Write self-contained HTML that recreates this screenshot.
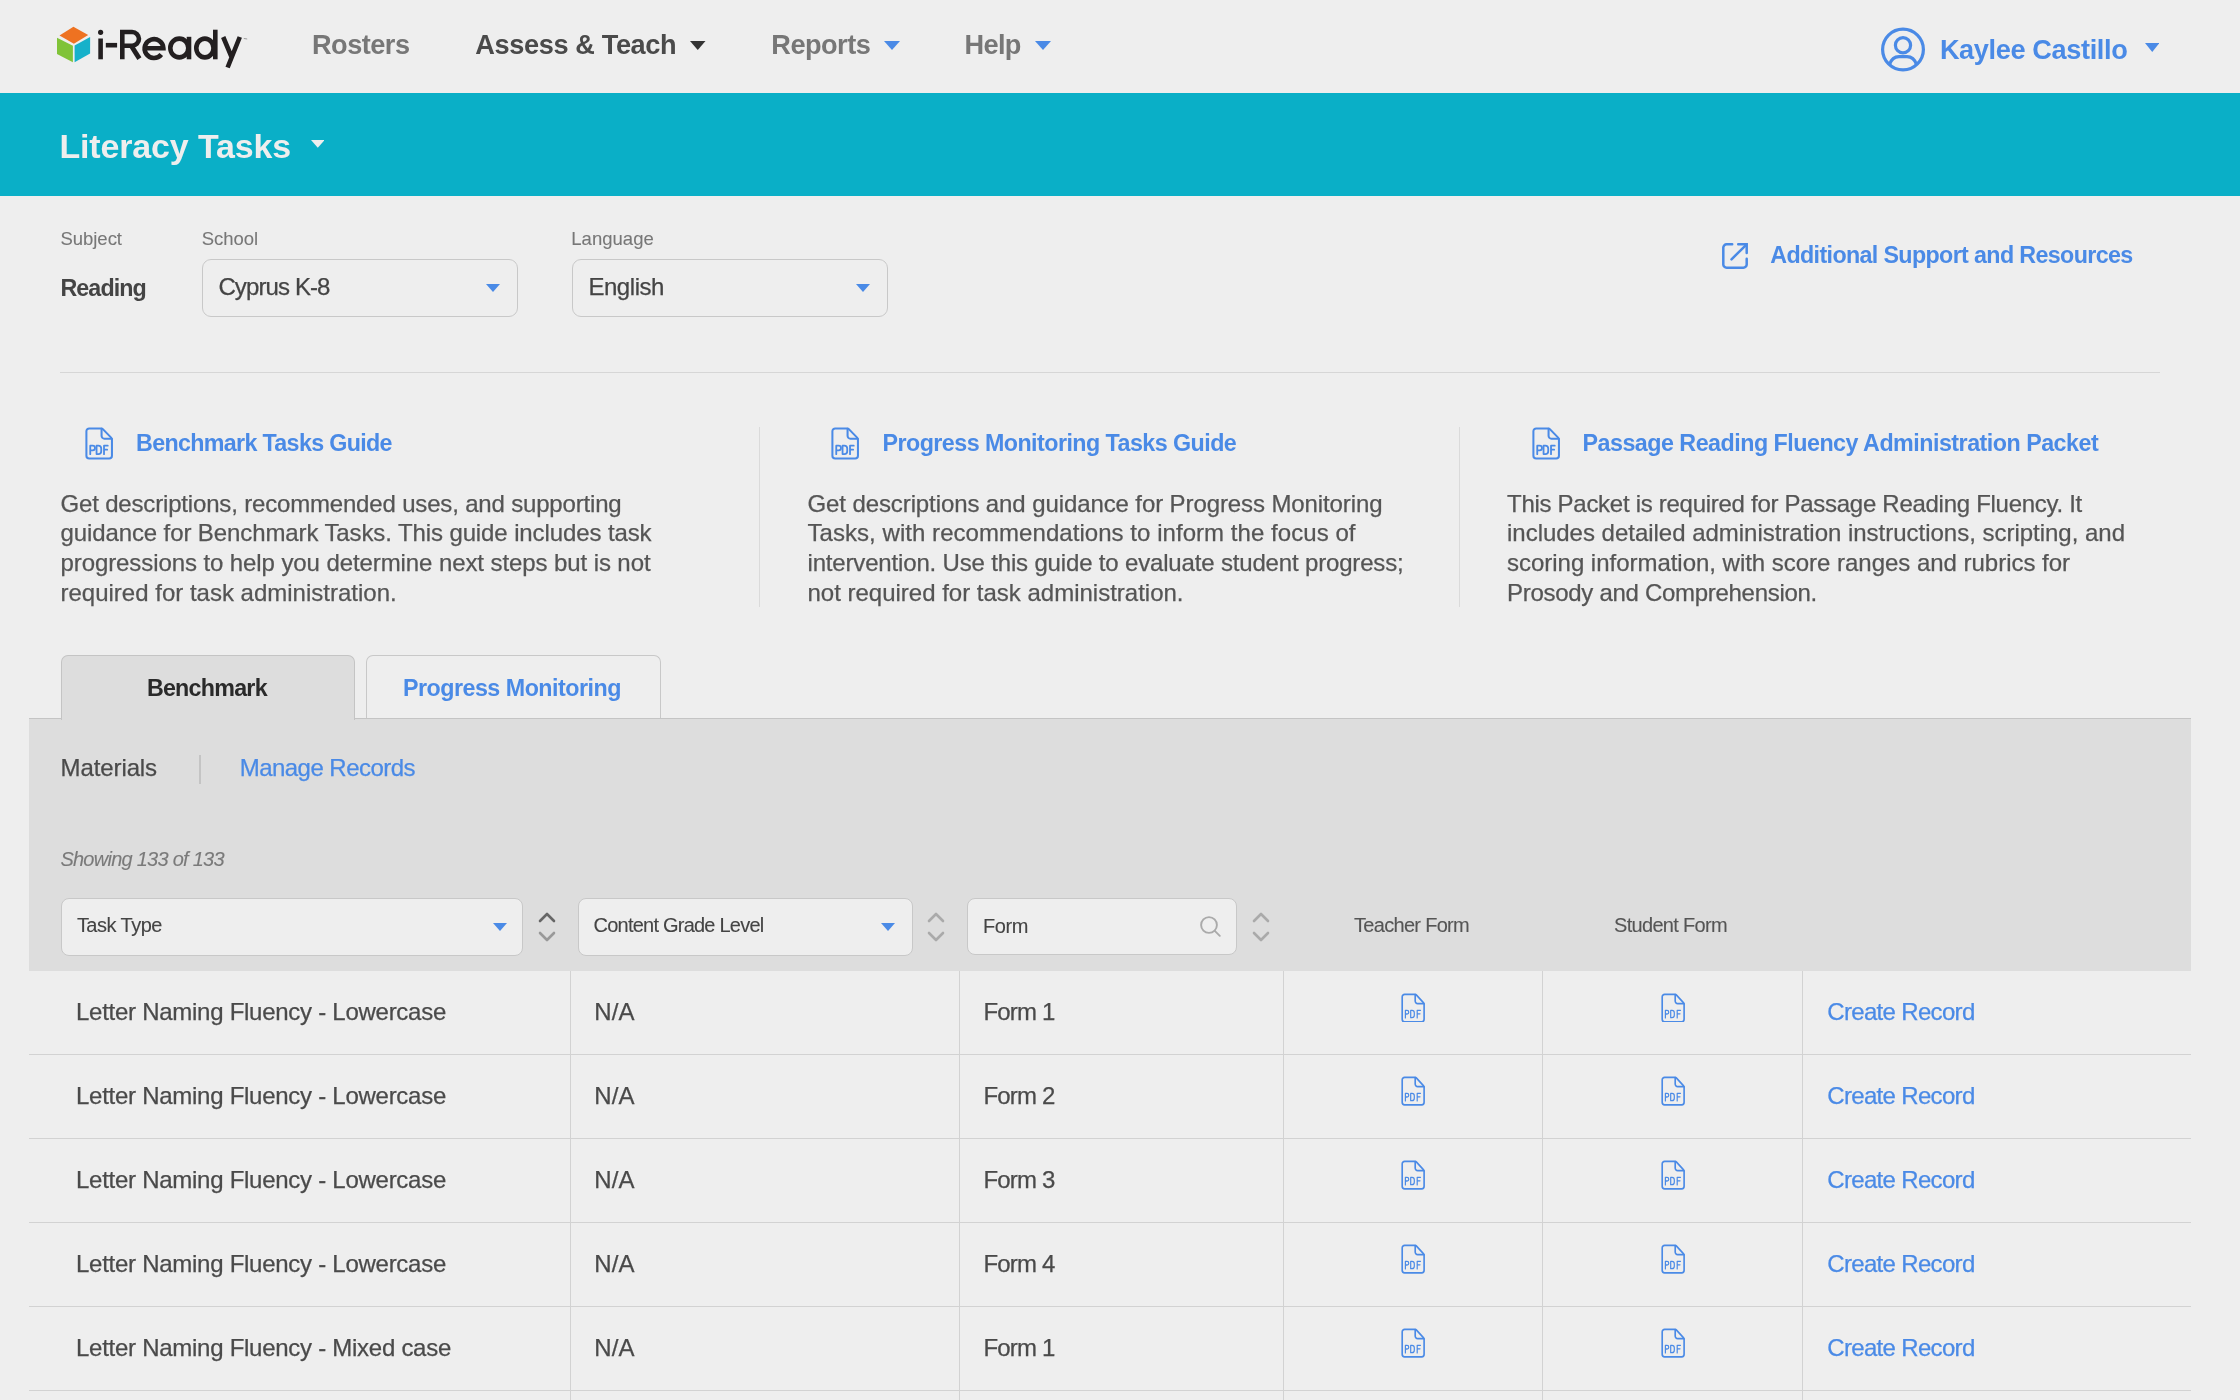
<!DOCTYPE html>
<html><head><meta charset="utf-8"><title>Literacy Tasks</title>
<style>
html,body{margin:0;padding:0;width:2240px;height:1400px;overflow:hidden;background:#eeeeee;font-family:"Liberation Sans",sans-serif}
.a{position:absolute;display:block}
.t{position:absolute;white-space:nowrap;line-height:1;-webkit-text-stroke:0.25px currentColor}
#root{position:absolute;left:0;top:0;width:2240px;height:1400px;will-change:transform}
.box{background:#eeeeee;border:1.5px solid #c8c8c8;box-sizing:border-box}
</style></head><body>
<svg width="0" height="0" style="position:absolute"><defs>
<g id="pdf" fill="none" stroke="#4a8ae6" stroke-width="1.75" stroke-linecap="round" stroke-linejoin="round">
<path d="M14.1 1.3 H3.6 A2.4 2.4 0 0 0 1.2 3.7 V24.8 A2.4 2.4 0 0 0 3.6 27.2 H20.7 A2.4 2.4 0 0 0 23.1 24.8 V10.6 A1.6 1.6 0 0 0 22.6 9.4 L15.3 1.8 A1.6 1.6 0 0 0 14.1 1.3 Z"/>
<path d="M14.2 1.5 V7.6 A2.5 2.5 0 0 0 16.7 10.1 H22.9"/>
<path d="M4.5 23.4 V16.1 H6.5 A2.05 2.05 0 0 1 6.5 20.2 H4.5" stroke-width="1.55"/>
<path d="M9.9 23.3 V16.1 H11.4 A2.5 2.5 0 0 1 13.9 18.6 V20.8 A2.5 2.5 0 0 1 11.4 23.3 Z" stroke-width="1.55"/>
<path d="M16.3 23.4 V16.1 H19.5 M16.3 19.5 H19" stroke-width="1.55"/>
</g>
<g id="pdfs" fill="none" stroke="#4a8ae6" stroke-width="1.65" stroke-linecap="round" stroke-linejoin="round">
<path d="M14.1 1.3 H3.6 A2.4 2.4 0 0 0 1.2 3.7 V24.8 A2.4 2.4 0 0 0 3.6 27.2 H20.7 A2.4 2.4 0 0 0 23.1 24.8 V10.6 A1.6 1.6 0 0 0 22.6 9.4 L15.3 1.8 A1.6 1.6 0 0 0 14.1 1.3 Z"/>
<path d="M14.2 1.5 V7.6 A2.5 2.5 0 0 0 16.7 10.1 H22.9"/>
<path d="M4.4 23.5 V16.3 H6 A1.75 1.75 0 0 1 6 19.8 H4.4" stroke-width="1.2"/>
<path d="M9.7 23.3 V16.3 H11 A2.3 2.3 0 0 1 13.3 18.6 V21 A2.3 2.3 0 0 1 11 23.3 Z" stroke-width="1.2"/>
<path d="M16.2 23.5 V16.3 H19.5 M16.2 19.6 H19" stroke-width="1.2"/>
</g></defs></svg>
<div id="root"><svg class="a" style="left:0;top:0" width="260" height="93" viewBox="0 0 260 93">
<g>
<path d="M73.4 26.8 L88.2 35 L73.9 43.7 L59.5 35.4 Z" fill="#ee7221"/>
<path d="M57 37.8 L72.9 45.7 V62.2 L57 53.9 Z" fill="#80c338"/>
<path d="M74.6 45.5 L90.1 37 V53.5 L74.6 62.2 Z" fill="#16b1ca"/>
</g>
<g fill="none" stroke="#231f20" stroke-width="4.6">
<circle cx="100.6" cy="32.3" r="2.6" fill="#231f20" stroke="none"/>
<path d="M100.6 38.5 V59.3"/>
<path d="M105.8 45.2 H117.1"/>
<path d="M122.3 59.3 V32 H132.1 A6.85 6.85 0 0 1 132.1 45.7 H122.3"/><path d="M131.2 45.7 L139.4 58.6" stroke-width="4.8"/>
<path d="M146.2 48.3 H163.4 A9.4 9.4 0 1 0 161.3 54.5"/>
<ellipse cx="179.3" cy="48" rx="9" ry="9.4"/>
<path d="M189 36.8 V59.3"/>
<ellipse cx="204.9" cy="48" rx="8.6" ry="9.4"/>
<path d="M215.3 29.7 V59.3"/>
<path d="M223.2 37 L231.8 57.5 M239.8 37 L227.6 67.5"/>
<path d="M243.8 38.5 L247.2 39" stroke="#9a9a9a" stroke-width="1"/>
</g>
</svg>
<div class="t" style="left:312.00px;top:31.00px;font-size:27.16px;color:#777777;font-weight:bold;-webkit-text-stroke:0;letter-spacing:-0.520px;">Rosters</div>
<div class="t" style="left:475.30px;top:31.00px;font-size:27.16px;color:#4a4a4a;font-weight:bold;-webkit-text-stroke:0;letter-spacing:-0.381px;">Assess &amp; Teach</div>
<svg class="a" style="left:690px;top:40.5px" width="15.5" height="9" viewBox="0 0 15.5 9"><path d="M0 0H15.5L7.75 9Z" fill="#333333"/></svg>
<div class="t" style="left:771.30px;top:31.00px;font-size:27.16px;color:#777777;font-weight:bold;-webkit-text-stroke:0;letter-spacing:-0.517px;">Reports</div>
<svg class="a" style="left:883.5px;top:40.5px" width="16" height="9" viewBox="0 0 16 9"><path d="M0 0H16L8.0 9Z" fill="#4a8ae6"/></svg>
<div class="t" style="left:964.60px;top:31.00px;font-size:27.16px;color:#777777;font-weight:bold;-webkit-text-stroke:0;letter-spacing:-0.664px;">Help</div>
<svg class="a" style="left:1034.8px;top:40.5px" width="16" height="9" viewBox="0 0 16 9"><path d="M0 0H16L8.0 9Z" fill="#4a8ae6"/></svg>
<svg class="a" style="left:1878px;top:25px" width="50" height="50" viewBox="0 0 50 50" fill="none" stroke="#4a8ae6" stroke-width="3.2">
<circle cx="25" cy="24.5" r="20.4"/>
<circle cx="25" cy="20.3" r="7.6"/>
<path d="M11.5 39.5 C13.5 33.5 17 31.6 21 31.6 H29 C33 31.6 36.5 33.5 38.5 39.5"/>
</svg>
<div class="t" style="left:1939.90px;top:36.00px;font-size:27.16px;color:#4a8ae6;font-weight:bold;-webkit-text-stroke:0;letter-spacing:-0.382px;">Kaylee Castillo</div>
<svg class="a" style="left:2144.5px;top:42.9px" width="14.5" height="9" viewBox="0 0 14.5 9"><path d="M0 0H14.5L7.25 9Z" fill="#4a8ae6"/></svg>
<div class="a" style="left:0;top:93px;width:2240px;height:103px;background:#0aafc7"></div>
<div class="t" style="left:59.40px;top:130.00px;font-size:33.95px;color:#eeeeee;font-weight:bold;-webkit-text-stroke:0;letter-spacing:-0.121px;">Literacy Tasks</div>
<svg class="a" style="left:310.9px;top:140.2px" width="13.6" height="7.8" viewBox="0 0 13.6 7.8"><path d="M0 0H13.6L6.8 7.8Z" fill="#eeeeee"/></svg>
<div class="t" style="left:60.40px;top:230.00px;font-size:18.5px;color:#777777;-webkit-text-stroke:0.1px currentColor;letter-spacing:-0.015px;">Subject</div>
<div class="t" style="left:201.70px;top:230.00px;font-size:18.5px;color:#777777;-webkit-text-stroke:0.1px currentColor;letter-spacing:-0.011px;">School</div>
<div class="t" style="left:571.30px;top:230.00px;font-size:18.5px;color:#777777;-webkit-text-stroke:0.1px currentColor;letter-spacing:0.023px;">Language</div>
<div class="t" style="left:60.40px;top:277.00px;font-size:23.28px;color:#444444;font-weight:bold;-webkit-text-stroke:0;letter-spacing:-0.891px;">Reading</div>
<div class="a box" style="left:202px;top:259px;width:316px;height:58px;border-radius:9px"></div>
<div class="t" style="left:218.40px;top:275.00px;font-size:24px;color:#444444;letter-spacing:-0.884px;">Cyprus K-8</div>
<svg class="a" style="left:486px;top:283.5px" width="14" height="8" viewBox="0 0 14 8"><path d="M0 0H14L7.0 8Z" fill="#4a8ae6"/></svg>
<div class="a box" style="left:572px;top:259px;width:316px;height:58px;border-radius:9px"></div>
<div class="t" style="left:588.40px;top:275.00px;font-size:24px;color:#444444;letter-spacing:-0.445px;">English</div>
<svg class="a" style="left:856px;top:283.5px" width="14" height="8" viewBox="0 0 14 8"><path d="M0 0H14L7.0 8Z" fill="#4a8ae6"/></svg>
<svg class="a" style="left:1722px;top:242.7px" width="26" height="26" viewBox="0 0 26 26" fill="none" stroke="#4a8ae6" stroke-width="2.5" stroke-linecap="round">
<path d="M10.2 1.3 H4.6 A3.3 3.3 0 0 0 1.3 4.6 V21.4 A3.3 3.3 0 0 0 4.6 24.7 H21.4 A3.3 3.3 0 0 0 24.7 21.4 V15.8"/>
<path d="M16.2 1.3 H24.7 V10" stroke-linejoin="miter"/><path d="M24.2 1.8 L9.5 16.3"/>
</svg>
<div class="t" style="left:1770.30px;top:244.00px;font-size:23.28px;color:#4a8ae6;font-weight:bold;-webkit-text-stroke:0;letter-spacing:-0.636px;">Additional Support and Resources</div>
<div class="a" style="left:60px;top:372px;width:2100px;height:1px;background:#d6d6d6"></div>
<svg class="a" style="left:84.8px;top:427px" width="28" height="32.5" viewBox="0 0 24 28" preserveAspectRatio="none"><use href="#pdf"/></svg>
<div class="t" style="left:136.00px;top:432.00px;font-size:23.28px;color:#4a8ae6;font-weight:bold;-webkit-text-stroke:0;letter-spacing:-0.666px;">Benchmark Tasks Guide</div>
<svg class="a" style="left:831.3px;top:427px" width="28" height="32.5" viewBox="0 0 24 28" preserveAspectRatio="none"><use href="#pdf"/></svg>
<div class="t" style="left:882.50px;top:432.00px;font-size:23.28px;color:#4a8ae6;font-weight:bold;-webkit-text-stroke:0;letter-spacing:-0.543px;">Progress Monitoring Tasks Guide</div>
<svg class="a" style="left:1532.3px;top:427px" width="28" height="32.5" viewBox="0 0 24 28" preserveAspectRatio="none"><use href="#pdf"/></svg>
<div class="t" style="left:1582.50px;top:432.00px;font-size:23.28px;color:#4a8ae6;font-weight:bold;-webkit-text-stroke:0;letter-spacing:-0.503px;">Passage Reading Fluency Administration Packet</div>
<div class="a" style="left:759px;top:427px;width:1px;height:180px;background:#dadada"></div>
<div class="a" style="left:1459px;top:427px;width:1px;height:180px;background:#dadada"></div>
<div class="t" style="left:60.50px;top:492.00px;font-size:24px;color:#555555;letter-spacing:-0.173px;">Get descriptions, recommended uses, and supporting</div>
<div class="t" style="left:60.50px;top:521.00px;font-size:24px;color:#555555;letter-spacing:-0.107px;">guidance for Benchmark Tasks. This guide includes task</div>
<div class="t" style="left:60.50px;top:551.00px;font-size:24px;color:#555555;letter-spacing:-0.090px;">progressions to help you determine next steps but is not</div>
<div class="t" style="left:60.50px;top:581.00px;font-size:24px;color:#555555;">required for task administration.</div>
<div class="t" style="left:807.50px;top:492.00px;font-size:24px;color:#555555;letter-spacing:-0.101px;">Get descriptions and guidance for Progress Monitoring</div>
<div class="t" style="left:807.50px;top:521.00px;font-size:24px;color:#555555;letter-spacing:0.049px;">Tasks, with recommendations to inform the focus of</div>
<div class="t" style="left:807.50px;top:551.00px;font-size:24px;color:#555555;letter-spacing:-0.167px;">intervention. Use this guide to evaluate student progress;</div>
<div class="t" style="left:807.50px;top:581.00px;font-size:24px;color:#555555;letter-spacing:-0.005px;">not required for task administration.</div>
<div class="t" style="left:1507.00px;top:492.00px;font-size:24px;color:#555555;letter-spacing:-0.282px;">This Packet is required for Passage Reading Fluency. It</div>
<div class="t" style="left:1507.00px;top:521.00px;font-size:24px;color:#555555;letter-spacing:-0.017px;">includes detailed administration instructions, scripting, and</div>
<div class="t" style="left:1507.00px;top:551.00px;font-size:24px;color:#555555;letter-spacing:-0.023px;">scoring information, with score ranges and rubrics for</div>
<div class="t" style="left:1507.00px;top:581.00px;font-size:24px;color:#555555;letter-spacing:-0.290px;">Prosody and Comprehension.</div>
<div class="a" style="left:29px;top:718px;width:2162px;height:253px;background:#dddddd;border-top:1.5px solid #c4c4c4;box-sizing:border-box"></div>
<div class="a" style="left:60.5px;top:655px;width:294.5px;height:65px;background:#dddddd;border:1.5px solid #c4c4c4;border-bottom:none;border-radius:7px 7px 0 0;box-sizing:border-box"></div>
<div class="a" style="left:366px;top:655px;width:294.5px;height:63px;background:#eeeeee;border:1.5px solid #c8c8c8;border-bottom:none;border-radius:7px 7px 0 0;box-sizing:border-box"></div>
<div class="t" style="left:146.90px;top:677.00px;font-size:23.28px;color:#2a2a2a;font-weight:bold;-webkit-text-stroke:0;letter-spacing:-0.756px;">Benchmark</div>
<div class="t" style="left:403.00px;top:677.00px;font-size:23.28px;color:#4a8ae6;font-weight:bold;-webkit-text-stroke:0;letter-spacing:-0.508px;">Progress Monitoring</div>
<div class="t" style="left:60.60px;top:756.00px;font-size:24px;color:#4a4a4a;letter-spacing:-0.107px;">Materials</div>
<div class="a" style="left:199px;top:754.5px;width:1.5px;height:29px;background:#c4c4c4"></div>
<div class="t" style="left:239.70px;top:756.00px;font-size:24px;color:#4a8ae6;letter-spacing:-0.534px;">Manage Records</div>
<div class="t" style="left:60.40px;top:849.00px;font-size:20px;color:#7a7a7a;font-style:italic;-webkit-text-stroke:0.1px currentColor;letter-spacing:-0.745px;">Showing 133 of 133</div>
<div class="a box" style="left:60.5px;top:897.5px;width:462px;height:58px;border-radius:8px"></div>
<div class="t" style="left:76.90px;top:915.00px;font-size:20px;color:#444444;-webkit-text-stroke:0.1px currentColor;letter-spacing:-0.520px;">Task Type</div>
<svg class="a" style="left:492.8px;top:922.9px" width="14" height="8" viewBox="0 0 14 8"><path d="M0 0H14L7.0 8Z" fill="#4a8ae6"/></svg>
<div class="a box" style="left:578px;top:897.5px;width:334.5px;height:58px;border-radius:8px"></div>
<div class="t" style="left:593.50px;top:915.00px;font-size:20px;color:#444444;-webkit-text-stroke:0.1px currentColor;letter-spacing:-0.767px;">Content Grade Level</div>
<svg class="a" style="left:881px;top:922.9px" width="14" height="8" viewBox="0 0 14 8"><path d="M0 0H14L7.0 8Z" fill="#4a8ae6"/></svg>
<div class="a box" style="left:967px;top:898.3px;width:269.5px;height:57px;border-radius:8px"></div>
<div class="t" style="left:983.00px;top:916.00px;font-size:20px;color:#444444;-webkit-text-stroke:0.1px currentColor;letter-spacing:-0.416px;">Form</div>
<svg class="a" style="left:1196px;top:912px" width="28" height="28" viewBox="0 0 28 28" fill="none" stroke="#aaaaaa" stroke-width="1.9" stroke-linecap="round"><circle cx="13" cy="13" r="7.9"/><path d="M18.8 18.8 L23.8 23.8"/></svg>
<svg class="a" style="left:538px;top:910px" width="18" height="34" viewBox="0 0 18 34" fill="none" stroke-width="2.6" stroke-linecap="round" stroke-linejoin="round"><path d="M2 11 L9 4 L16 11" stroke="#666666"/><path d="M2 23 L9 30 L16 23" stroke="#999999"/></svg>
<svg class="a" style="left:927px;top:910px" width="18" height="34" viewBox="0 0 18 34" fill="none" stroke-width="2.6" stroke-linecap="round" stroke-linejoin="round"><path d="M2 11 L9 4 L16 11" stroke="#aaaaaa"/><path d="M2 23 L9 30 L16 23" stroke="#aaaaaa"/></svg>
<svg class="a" style="left:1252px;top:910px" width="18" height="34" viewBox="0 0 18 34" fill="none" stroke-width="2.6" stroke-linecap="round" stroke-linejoin="round"><path d="M2 11 L9 4 L16 11" stroke="#aaaaaa"/><path d="M2 23 L9 30 L16 23" stroke="#aaaaaa"/></svg>
<div class="t" style="left:1354.00px;top:915.00px;font-size:20px;color:#555555;-webkit-text-stroke:0.1px currentColor;letter-spacing:-0.698px;">Teacher Form</div>
<div class="t" style="left:1614.00px;top:915.00px;font-size:20px;color:#555555;-webkit-text-stroke:0.1px currentColor;letter-spacing:-0.680px;">Student Form</div>
<div class="a" style="left:570px;top:971px;width:1px;height:429px;background:#d2d2d2"></div>
<div class="a" style="left:959px;top:971px;width:1px;height:429px;background:#d2d2d2"></div>
<div class="a" style="left:1283px;top:971px;width:1px;height:429px;background:#d2d2d2"></div>
<div class="a" style="left:1542px;top:971px;width:1px;height:429px;background:#d2d2d2"></div>
<div class="a" style="left:1802px;top:971px;width:1px;height:429px;background:#d2d2d2"></div>
<div class="t" style="left:76.00px;top:1000.00px;font-size:24px;color:#4a4a4a;letter-spacing:-0.268px;">Letter Naming Fluency - Lowercase</div>
<div class="t" style="left:594.20px;top:1000.00px;font-size:24px;color:#4a4a4a;letter-spacing:0.197px;">N/A</div>
<div class="t" style="left:983.50px;top:1000.00px;font-size:24px;color:#4a4a4a;letter-spacing:-0.835px;">Form 1</div>
<svg class="a" style="left:1401px;top:992.5px" width="24" height="29.7" viewBox="0 0 24 28" preserveAspectRatio="none"><use href="#pdfs"/></svg>
<svg class="a" style="left:1661px;top:992.5px" width="24" height="29.7" viewBox="0 0 24 28" preserveAspectRatio="none"><use href="#pdfs"/></svg>
<div class="t" style="left:1827.30px;top:1000.00px;font-size:24px;color:#4a8ae6;letter-spacing:-0.675px;">Create Record</div>
<div class="a" style="left:29px;top:1054px;width:2162px;height:1px;background:#d2d2d2"></div>
<div class="t" style="left:76.00px;top:1084.00px;font-size:24px;color:#4a4a4a;letter-spacing:-0.268px;">Letter Naming Fluency - Lowercase</div>
<div class="t" style="left:594.20px;top:1084.00px;font-size:24px;color:#4a4a4a;letter-spacing:0.197px;">N/A</div>
<div class="t" style="left:983.50px;top:1084.00px;font-size:24px;color:#4a4a4a;letter-spacing:-0.835px;">Form 2</div>
<svg class="a" style="left:1401px;top:1076.4px" width="24" height="29.7" viewBox="0 0 24 28" preserveAspectRatio="none"><use href="#pdfs"/></svg>
<svg class="a" style="left:1661px;top:1076.4px" width="24" height="29.7" viewBox="0 0 24 28" preserveAspectRatio="none"><use href="#pdfs"/></svg>
<div class="t" style="left:1827.30px;top:1084.00px;font-size:24px;color:#4a8ae6;letter-spacing:-0.675px;">Create Record</div>
<div class="a" style="left:29px;top:1138px;width:2162px;height:1px;background:#d2d2d2"></div>
<div class="t" style="left:76.00px;top:1168.00px;font-size:24px;color:#4a4a4a;letter-spacing:-0.268px;">Letter Naming Fluency - Lowercase</div>
<div class="t" style="left:594.20px;top:1168.00px;font-size:24px;color:#4a4a4a;letter-spacing:0.197px;">N/A</div>
<div class="t" style="left:983.50px;top:1168.00px;font-size:24px;color:#4a4a4a;letter-spacing:-0.835px;">Form 3</div>
<svg class="a" style="left:1401px;top:1160.3px" width="24" height="29.7" viewBox="0 0 24 28" preserveAspectRatio="none"><use href="#pdfs"/></svg>
<svg class="a" style="left:1661px;top:1160.3px" width="24" height="29.7" viewBox="0 0 24 28" preserveAspectRatio="none"><use href="#pdfs"/></svg>
<div class="t" style="left:1827.30px;top:1168.00px;font-size:24px;color:#4a8ae6;letter-spacing:-0.675px;">Create Record</div>
<div class="a" style="left:29px;top:1222px;width:2162px;height:1px;background:#d2d2d2"></div>
<div class="t" style="left:76.00px;top:1252.00px;font-size:24px;color:#4a4a4a;letter-spacing:-0.268px;">Letter Naming Fluency - Lowercase</div>
<div class="t" style="left:594.20px;top:1252.00px;font-size:24px;color:#4a4a4a;letter-spacing:0.197px;">N/A</div>
<div class="t" style="left:983.50px;top:1252.00px;font-size:24px;color:#4a4a4a;letter-spacing:-0.835px;">Form 4</div>
<svg class="a" style="left:1401px;top:1244.2px" width="24" height="29.7" viewBox="0 0 24 28" preserveAspectRatio="none"><use href="#pdfs"/></svg>
<svg class="a" style="left:1661px;top:1244.2px" width="24" height="29.7" viewBox="0 0 24 28" preserveAspectRatio="none"><use href="#pdfs"/></svg>
<div class="t" style="left:1827.30px;top:1252.00px;font-size:24px;color:#4a8ae6;letter-spacing:-0.675px;">Create Record</div>
<div class="a" style="left:29px;top:1306px;width:2162px;height:1px;background:#d2d2d2"></div>
<div class="t" style="left:76.00px;top:1336.00px;font-size:24px;color:#4a4a4a;letter-spacing:-0.269px;">Letter Naming Fluency - Mixed case</div>
<div class="t" style="left:594.20px;top:1336.00px;font-size:24px;color:#4a4a4a;letter-spacing:0.197px;">N/A</div>
<div class="t" style="left:983.50px;top:1336.00px;font-size:24px;color:#4a4a4a;letter-spacing:-0.835px;">Form 1</div>
<svg class="a" style="left:1401px;top:1328.1px" width="24" height="29.7" viewBox="0 0 24 28" preserveAspectRatio="none"><use href="#pdfs"/></svg>
<svg class="a" style="left:1661px;top:1328.1px" width="24" height="29.7" viewBox="0 0 24 28" preserveAspectRatio="none"><use href="#pdfs"/></svg>
<div class="t" style="left:1827.30px;top:1336.00px;font-size:24px;color:#4a8ae6;letter-spacing:-0.675px;">Create Record</div>
<div class="a" style="left:29px;top:1390px;width:2162px;height:1px;background:#d2d2d2"></div>
</div></body></html>
